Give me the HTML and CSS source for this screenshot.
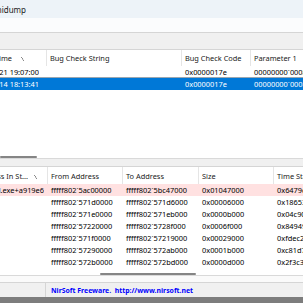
FILE: index.html
```html
<!doctype html>
<html lang="en">
    <head>
        <meta charset="UTF-8" />
        <title>BlueScreenView</title>
        <link rel="stylesheet" href="styles.css">
    </head>
    <body>
        <div class="window">
            <div class="titlebar">
                <div class="clip title-clip"><span>BlueScreenView - C:\Windows\Minidump</span></div>
            </div>
            <div class="menubar"></div>
            <div class="toolbar"></div>

            <!-- crash list -->
            <div class="list upper">
                <div class="row head">
                    <div class="cell c1">
                        <div class="clip"><span>Crash Time</span></div>
                        <span class="sort"></span>
                    </div>
                    <div class="cell c2">Bug Check String</div>
                    <div class="cell c3">Bug Check Code</div>
                    <div class="cell c4">Parameter 1</div>
                </div>
                <div class="row">
                    <div class="cell c1"><div class="clip"><span>2023/12/21 19:07:00</span></div></div>
                    <div class="cell c2"></div>
                    <div class="cell c3">0x0000017e</div>
                    <div class="cell c4">00000000`00080000</div>
                </div>
                <div class="row selected">
                    <div class="cell c1"><div class="clip"><span>2023/12/14 18:13:41</span></div></div>
                    <div class="cell c2"></div>
                    <div class="cell c3">0x0000017e</div>
                    <div class="cell c4">00000000`00080000</div>
                </div>
                <div class="fill"></div>
                <div class="hscroll"><div class="thumb thumb-upper"></div></div>
            </div>

            <div class="splitter"></div>

            <!-- driver list -->
            <div class="list lower">
                <div class="row head">
                    <div class="cell d1">
                        <div class="clip"><span>Address In St...</span></div>
                        <span class="sort"></span>
                    </div>
                    <div class="cell d2">From Address</div>
                    <div class="cell d3">To Address</div>
                    <div class="cell d4">Size</div>
                    <div class="cell d5">Time Stamp</div>
                </div>
                <div class="row marked">
                    <div class="cell d1"><div class="clip"><span>ntoskrnl.exe+a919e6</span></div></div>
                    <div class="cell d2">fffff802`5ac00000</div>
                    <div class="cell d3">fffff802`5bc47000</div>
                    <div class="cell d4">0x01047000</div>
                    <div class="cell d5">0x6479e4f2</div>
                </div>
                <div class="row">
                    <div class="cell d1"></div>
                    <div class="cell d2">fffff802`571d0000</div>
                    <div class="cell d3">fffff802`571d6000</div>
                    <div class="cell d4">0x00006000</div>
                    <div class="cell d5">0x18653e11</div>
                </div>
                <div class="row">
                    <div class="cell d1"></div>
                    <div class="cell d2">fffff802`571e0000</div>
                    <div class="cell d3">fffff802`571eb000</div>
                    <div class="cell d4">0x0000b000</div>
                    <div class="cell d5">0x04c90b3a</div>
                </div>
                <div class="row">
                    <div class="cell d1"></div>
                    <div class="cell d2">fffff802`57220000</div>
                    <div class="cell d3">fffff802`5728f000</div>
                    <div class="cell d4">0x0006f000</div>
                    <div class="cell d5">0x84949a6c</div>
                </div>
                <div class="row">
                    <div class="cell d1"></div>
                    <div class="cell d2">fffff802`571f0000</div>
                    <div class="cell d3">fffff802`57219000</div>
                    <div class="cell d4">0x00029000</div>
                    <div class="cell d5">0xfdec2b0e</div>
                </div>
                <div class="row">
                    <div class="cell d1"></div>
                    <div class="cell d2">fffff802`57290000</div>
                    <div class="cell d3">fffff802`572ab000</div>
                    <div class="cell d4">0x0001b000</div>
                    <div class="cell d5">0xc81d7a45</div>
                </div>
                <div class="row">
                    <div class="cell d1"></div>
                    <div class="cell d2">fffff802`572b0000</div>
                    <div class="cell d3">fffff802`572bd000</div>
                    <div class="cell d4">0x0000d000</div>
                    <div class="cell d5">0x2f3c3e90</div>
                </div>
                <div class="fill"></div>
                <div class="hscroll"><div class="thumb thumb-lower"></div></div>
                <div class="gap"></div>
            </div>

            <div class="statusbar">
                <div class="panel first"></div>
                <div class="panel link">NirSoft Freeware.&nbsp; http://www.nirsoft.net</div>
            </div>
            <div class="taskbar"></div>
        </div>
    </body>
</html>
```

FILE: styles.css
```css
* {
    margin: 0;
    padding: 0;
    box-sizing: border-box;
}

body {
    width: 303px;
    height: 303px;
    overflow: hidden;
    background: #ffffff;
    font-family: "Noto Sans", "Open Sans", sans-serif;
    font-size: 7.4px;
    color: #000000;
}

.window {
    display: flex;
    flex-direction: column;
    height: 303px;
}

/* clipped text that overflows to the left */
.clip {
    display: flex;
    justify-content: flex-end;
    overflow: hidden;
    white-space: nowrap;
}

.titlebar {
    height: 18px;
    background: #edf3f8;
    display: flex;
    align-items: center;
    font-size: 8px;
    color: #1a1a1a;
}

.title-clip {
    width: 26px;
}

.menubar {
    height: 14px;
    background: #fbfcfd;
}

.toolbar {
    height: 18px;
    background: #f0f0f0;
    border-top: 1px solid #d5d5d5;
    border-bottom: 1px solid #d5d5d5;
}

.list {
    display: flex;
    flex-direction: column;
    background: #ffffff;
}

.upper {
    height: 109px;
}

.lower {
    height: 115px;
}

.row {
    display: flex;
    height: 12px;
    align-items: center;
    white-space: nowrap;
}

.row.head {
    height: 16px;
    color: #1a1a1a;
}

.lower .row.head {
    height: 17px;
}

.cell {
    height: 100%;
    display: flex;
    align-items: center;
    padding-left: 3px;
    overflow: hidden;
    flex-shrink: 0;
}

.head .cell {
    border-right: 1px solid #e5e5e5;
}

.head .cell:last-child {
    border-right: none;
}

.c1 { width: 47px; padding-left: 0; padding-right: 8px; }
.c2 { width: 135px; }
.c3 { width: 69px; }
.c4 { flex: 1; }

.d1 { width: 48px; padding-left: 0; padding-right: 4px; }
.d2 { width: 75px; }
.d3 { width: 76px; }
.d4 { width: 75px; }
.d5 { flex: 1; }

.c1 .clip,
.d1 .clip {
    flex: 1;
}

.head .c1 .clip {
    flex: none;
    width: 12px;
}

.head .d1 .clip {
    flex: none;
    width: 28px;
}

.head .c1,
.head .d1 {
    justify-content: flex-start;
}

.sort {
    width: 3px;
    height: 4px;
    margin-left: 9px;
    margin-top: 2px;
    background: linear-gradient(
        to top right,
        transparent 42%,
        #8a8a8a 45%,
        #8a8a8a 58%,
        transparent 61%
    );
}

.lower .sort {
    margin-left: 6px;
}

.selected {
    background: #0078d7;
    color: #ffffff;
    box-shadow: 0 -1px 0 #9aa6b0;
}

.marked {
    background: #ffe1e1;
}

.fill {
    flex: 1;
}

.hscroll {
    height: 3px;
    border-bottom: 1px solid #d9d9d9;
    position: relative;
}

.thumb {
    position: absolute;
    top: 0;
    height: 2px;
    border-radius: 1px;
    background: #858585;
}

.thumb-upper {
    left: 0;
    width: 37px;
}

.thumb-lower {
    left: 100px;
    width: 96px;
}

.gap {
    height: 6px;
    background: #fafafa;
}

.splitter {
    height: 8px;
    background: #f0f0f0;
    border-bottom: 1px solid #d5d5d5;
}

.statusbar {
    height: 15px;
    display: flex;
    background: #f0f0f0;
    border-top: 1px solid #d5d5d5;
}

.panel {
    display: flex;
    align-items: center;
    white-space: nowrap;
}

.panel.first {
    width: 46px;
    border-right: 1px solid #d5d5d5;
}

.panel.link {
    padding-left: 5px;
    color: #0000ff;
    font-weight: 700;
    font-size: 6.9px;
}

.taskbar {
    height: 6px;
    background: #7d7d7d;
}
```
